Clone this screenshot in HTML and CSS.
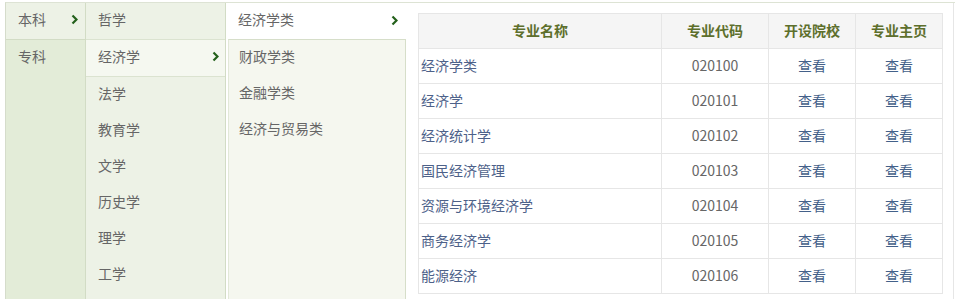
FILE: index.html
```html
<!DOCTYPE html>
<html lang="zh-CN">

<head>
    <meta charset="UTF-8">
    <title>专业目录</title>
    <link rel="stylesheet" href="styles.css">
</head>

<body>
    <div id="wrap">
        <ul class="col col-level">
            <li class="item on">本科<svg class="arrow" width="7" height="11" viewBox="0 0 7 11"><polyline points="1.5,1.5 5.5,5.5 1.5,9.5" /></svg></li>
            <li class="item">专科</li>
        </ul>
        <ul class="col col-subject">
            <li class="item">哲学</li>
            <li class="item on">经济学<svg class="arrow" width="7" height="11" viewBox="0 0 7 11"><polyline points="1.5,1.5 5.5,5.5 1.5,9.5" /></svg></li>
            <li class="item">法学</li>
            <li class="item">教育学</li>
            <li class="item">文学</li>
            <li class="item">历史学</li>
            <li class="item">理学</li>
            <li class="item">工学</li>
        </ul>
        <div class="col col-class">
            <div class="item on">经济学类<svg class="arrow" width="7" height="11" viewBox="0 0 7 11"><polyline points="1.5,1.5 5.5,5.5 1.5,9.5" /></svg></div>
            <ul class="class-list">
                <li class="item">财政学类</li>
                <li class="item">金融学类</li>
                <li class="item">经济与贸易类</li>
            </ul>
        </div>
        <div id="content">
            <table>
                <tr>
                    <th class="c-name">专业名称</th>
                    <th class="c-code">专业代码</th>
                    <th class="c-school">开设院校</th>
                    <th class="c-home">专业主页</th>
                </tr>
                <tr><td class="name">经济学类</td><td>020100</td><td class="link">查看</td><td class="link">查看</td></tr>
                <tr><td class="name">经济学</td><td>020101</td><td class="link">查看</td><td class="link">查看</td></tr>
                <tr><td class="name">经济统计学</td><td>020102</td><td class="link">查看</td><td class="link">查看</td></tr>
                <tr><td class="name">国民经济管理</td><td>020103</td><td class="link">查看</td><td class="link">查看</td></tr>
                <tr><td class="name">资源与环境经济学</td><td>020104</td><td class="link">查看</td><td class="link">查看</td></tr>
                <tr><td class="name">商务经济学</td><td>020105</td><td class="link">查看</td><td class="link">查看</td></tr>
                <tr><td class="name">能源经济</td><td>020106</td><td class="link">查看</td><td class="link">查看</td></tr>
            </table>
        </div>
    </div>
</body>

</html>
```

FILE: styles.css
```css
body {
    margin: 0;
    font-family: "Noto Sans CJK SC", "Liberation Sans", sans-serif;
    font-size: 14px;
    color: #666;
    background: #fff;
}

ul {
    margin: 0;
    padding: 0;
    list-style: none;
}

#wrap {
    display: flex;
    margin: 2px 0 0 5px;
    border-top: 1px solid #dde3d4;
    border-left: 1px solid #d5dccb;
    height: 300px;
}

.col {
    flex: none;
}

.item {
    position: relative;
    height: 36px;
    line-height: 33px;
    padding-left: 12px;
}

.arrow {
    position: absolute;
    right: 7px;
    top: 11px;
    fill: none;
    stroke: #23601a;
    stroke-width: 2.2;
}

.col-level {
    width: 79px;
    background: #e3ecd8;
    border-right: 1px solid #d2dcc5;
}

.col-level .item.on {
    background: #edf2e6;
    border-bottom: 1px solid #d2dcc5;
}

.col-subject {
    width: 139px;
    background: #edf2e6;
    border-right: 1px solid #d2dcc5;
}

.col-subject .item:first-child {
    border-bottom: 1px solid #dbe3d0;
}

.col-subject .item.on {
    background: #f5f8f0;
    border-bottom: 1px solid #dbe3d0;
}

.col-subject .item.on .arrow {
    right: 6px;
}

.col-class {
    width: 180px;
    background: #fff;
}

.col-class .item {
    padding-left: 12px;
}

.col-class .item.on .arrow {
    right: 8px;
    top: 12px;
}

.class-list {
    margin-left: 2px;
    height: 262px;
    background: #f5f7ef;
    border: 1px solid #d6dec9;
    border-left-color: #e2e8d8;
}

.class-list .item {
    padding-left: 10px;
}

#content {
    flex: 1;
    padding: 10px 10px 0 12px;
    border-right: 1px solid #e6e6e6;
    margin-right: 2px;
}

table {
    border-collapse: collapse;
    width: 525px;
}

th, td {
    border: 1px solid #e6e6e6;
    height: 32px;
    padding: 0 0 2px;
    text-align: center;
    font-weight: normal;
}

th {
    background: #f5f5f5;
    color: #5d6f2c;
    font-weight: bold;
}

td {
    color: #666;
}

td.name {
    text-align: left;
    padding-left: 2px;
    color: #4d6189;
}

td.link {
    color: #436089;
}

.c-name { width: 242px; }
.c-code { width: 106px; }
.c-school { width: 86px; }
```
